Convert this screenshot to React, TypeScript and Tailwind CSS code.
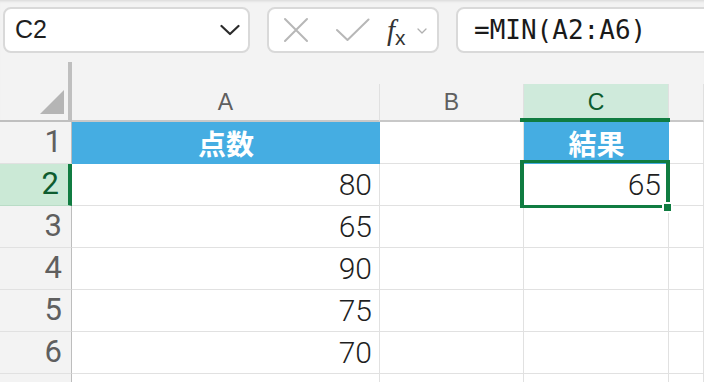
import React from "react";

const GREEN = "#107c41";
const BLUE = "#45ade2";

const numFont = { fontFamily: 'Roboto,"Liberation Sans",Arial,sans-serif', fontWeight: 300 };

function ColHeader({ label, sel }: { label: string; sel?: boolean }) {
  return (
    <div className="flex flex-col">
      <div className="h-[22px]" />
      <div
        className={
          "flex-1 flex items-center justify-center border-r border-[#e0e0e0] border-b-2 border-b-[#c8c8c8] text-[23px] " +
          (sel ? "bg-[#cfeadb] text-[#0e5c2f]" : "text-[#5f5f5f]")
        }
        style={{ fontFamily: '"Liberation Sans",Arial,sans-serif' }}
      >
        {label}
      </div>
    </div>
  );
}

function RowHeader({ n, sel }: { n?: number; sel?: boolean }) {
  return (
    <div
      className={
        "flex items-center justify-end pr-[9px] text-[31px] border-b " +
        (sel
          ? "bg-[#cbe9d6] text-[#0e5c2f] border-r-4 border-r-[#107c41] border-b-[#b9dcc6] pr-[6px]"
          : "bg-[#f3f3f3] text-[#5f5f5f] border-r border-r-[#bdbdbd] border-b-[#e1e1e1]")
      }
      style={{ fontFamily: 'Roboto,"Liberation Sans",Arial,sans-serif', fontWeight: 400 }}
    >
      {n}
    </div>
  );
}

function Cell({ v, head }: { v?: string; head?: boolean }) {
  if (head) {
    return (
      <div
        className="flex items-center justify-center text-white font-bold text-[28px]"
        style={{ backgroundColor: BLUE, fontFamily: '"Noto Sans CJK JP","Noto Sans",sans-serif' }}
      >
        {v}
      </div>
    );
  }
  return (
    <div
      className="flex items-center justify-end pr-[7px] text-[30px] text-[#1f1f1f] bg-white border-r border-b border-[#e1e1e1]"
      style={numFont}
    >
      {v}
    </div>
  );
}

export default function App() {
  const data = ["80", "65", "90", "75", "70"];
  return (
    <div className="w-[704px] h-[382px] overflow-hidden bg-[#f3f3f3] shadow-[inset_0_3px_3px_-2px_rgba(0,0,0,0.12)]">
      {/* toolbar */}
      <div className="h-[62px] flex pt-[7px] pl-[3px] gap-[17px]">
        <div className="w-[247px] h-[46px] shrink-0 rounded-[8px] border-2 border-[#d9d9d9] bg-white flex items-center pl-[10px] pr-[8px]">
          <span className="text-[25px] text-[#1f1f1f] flex-1" style={{ fontFamily: '"Liberation Sans",Arial,sans-serif' }}>
            C2
          </span>
          <svg width="20" height="12" viewBox="0 0 20 12">
            <path d="M1.5 2 L10 10 L18.5 2" fill="none" stroke="#2b2b2b" strokeWidth="2.2" strokeLinecap="round" strokeLinejoin="round" />
          </svg>
        </div>
        <div className="w-[172px] h-[46px] shrink-0 rounded-[8px] border-2 border-[#d9d9d9] bg-white flex items-center pl-[14px]">
          <svg width="26" height="26" viewBox="0 0 26 26">
            <path d="M2 2 L24 24 M24 2 L2 24" stroke="#b7b7b7" strokeWidth="2" strokeLinecap="round" />
          </svg>
          <svg width="34" height="24" viewBox="0 0 34 24" className="ml-[27px]">
            <path d="M1 12 L11.5 22 L32.5 1.5" fill="none" stroke="#b7b7b7" strokeWidth="2" strokeLinecap="round" strokeLinejoin="round" />
          </svg>
          <span className="ml-[17px] text-[#333] leading-none flex items-end" style={{ fontFamily: '"Liberation Serif",serif' }}>
            <span className="italic text-[29px]">f</span>
            <span className="text-[21px] translate-y-[3px]" style={{ fontFamily: '"Liberation Sans",Arial,sans-serif' }}>x</span>
          </span>
          <svg width="10" height="6" viewBox="0 0 10 6" className="ml-[11px] mt-[2px]">
            <path d="M1 1 L5 5 L9 1" fill="none" stroke="#b0b0b0" strokeWidth="1.3" strokeLinecap="round" strokeLinejoin="round" />
          </svg>
        </div>
        <div className="w-[320px] h-[46px] shrink-0 rounded-[8px] border-2 border-[#d9d9d9] bg-white flex items-center pl-[16px]">
          <span className="text-[26px] text-[#1a1a1a]" style={{ fontFamily: '"DejaVu Sans Mono","Liberation Mono",monospace' }}>
            =MIN(A2:A6)
          </span>
        </div>
      </div>

      {/* sheet */}
      <div className="relative grid grid-cols-[72px_308px_144px_145px_1fr] grid-rows-[60px_42px_42px_42px_42px_42px_42px_42px]">
        {/* corner */}
        <div className="border-r-4 border-r-[#bfbfbf] border-b-2 border-b-[#bfbfbf] flex items-end justify-end pr-[4px] pb-[6px]">
          <svg width="24" height="24" viewBox="0 0 24 24">
            <path d="M24 0 L24 24 L0 24 Z" fill="#b5b5b5" />
          </svg>
        </div>
        <ColHeader label="A" />
        <ColHeader label="B" />
        <ColHeader label="C" sel />
        <ColHeader label="" />

        {/* row 1 */}
        <RowHeader n={1} />
        <Cell v="点数" head />
        <Cell />
        <Cell v="結果" head />
        <Cell />

        {[0, 1, 2, 3, 4].map((i) => (
          <React.Fragment key={i}>
            <RowHeader n={i + 2} sel={i === 0} />
            <Cell v={data[i]} />
            <Cell />
            <Cell v={i === 0 ? "65" : ""} />
            <Cell />
          </React.Fragment>
        ))}

        <RowHeader />
        <Cell />
        <Cell />
        <Cell />
        <Cell />

        {/* selection overlays */}
        <div className="absolute left-[520px] top-[56px] w-[150px] h-[4px]" style={{ backgroundColor: GREEN }} />
        <div
          className="absolute left-[520px] top-[98px] w-[150px] h-[48px] border-x-4 border-y-[3px]"
          style={{ borderColor: GREEN }}
        />
        <div className="absolute left-[662px] top-[140px] w-[11px] h-[11px] border-2 border-white" style={{ backgroundColor: GREEN }} />
      </div>
    </div>
  );
}
